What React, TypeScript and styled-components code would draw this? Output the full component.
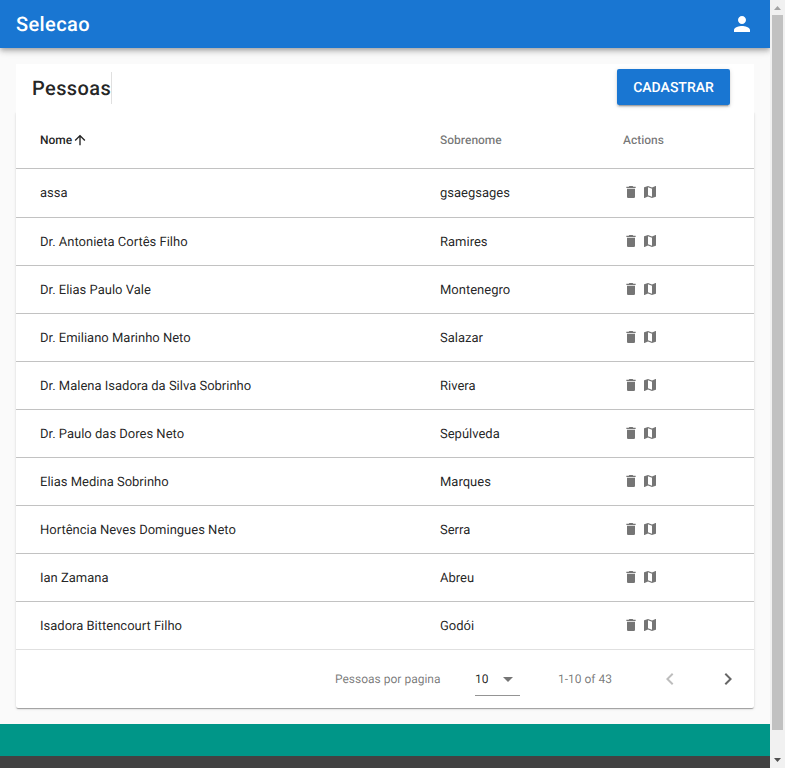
import React from "react";
import styled, { createGlobalStyle } from "styled-components";

const GlobalStyle = createGlobalStyle`
  * { box-sizing: border-box; }
  html, body { margin: 0; padding: 0; overflow: hidden; }
  body { font-family: Roboto, "Liberation Sans", sans-serif; color: rgba(0, 0, 0, 0.87); background: #fafafa; text-rendering: geometricPrecision; }
`;

const Window = styled.div`
  display: grid;
  grid-template-columns: 770px 15px;
  height: 768px;
  overflow: hidden;
`;

const Page = styled.div`
  display: flex;
  flex-direction: column;
  min-width: 0;
  overflow: hidden;
  background: #fafafa;
`;

const Toolbar = styled.header`
  flex: none;
  display: flex;
  align-items: center;
  justify-content: space-between;
  height: 48px;
  padding: 0 16px;
  color: #fff;
  background: #1976d2;
  box-shadow: 0 2px 4px -1px rgba(0, 0, 0, 0.2), 0 4px 5px rgba(0, 0, 0, 0.14), 0 1px 10px rgba(0, 0, 0, 0.12);
`;

const Title = styled.h1`
  margin: 0;
  font-size: 20px;
  font-weight: 500;
  line-height: 24px;
  letter-spacing: 0.4px;
  white-space: nowrap;
`;

const Content = styled.main`
  flex: none;
  height: 676px;
  padding: 16px 16px 0;
`;

const Heading = styled.div`
  display: flex;
  align-items: center;
  height: 48px;
  padding: 0 24px 0 16px;
  background: #fff;
`;

const Divider = styled.span`
  width: 1px;
  height: 32px;
  margin-right: auto;
  background: rgba(0, 0, 0, 0.12);
`;

const PrimaryButton = styled.button`
  width: 113px;
  height: 36px;
  margin-top: -2px;
  padding: 2px 0 0;
  border: 0;
  border-radius: 2px;
  color: #fff;
  background: #1976d2;
  font: 500 14px Roboto, sans-serif;
  text-rendering: inherit;
  box-shadow: 0 3px 1px -2px rgba(0, 0, 0, 0.2), 0 2px 2px rgba(0, 0, 0, 0.14), 0 1px 5px rgba(0, 0, 0, 0.12);
`;

const Card = styled.section`
  background: #fff;
  border-radius: 0 0 2px 2px;
  box-shadow: 0 2px 1px -1px rgba(0, 0, 0, 0.2), 0 1px 1px rgba(0, 0, 0, 0.14), 0 1px 3px rgba(0, 0, 0, 0.12);
  clip-path: inset(0 -4px -6px -4px);
`;

const Row = styled.div<{ $first?: boolean }>`
  display: grid;
  grid-template-columns: 400px 183px 1fr;
  align-items: center;
  height: 48px;
  padding-left: 24px;
  padding-bottom: ${(p) => (p.$first ? "1px" : "0")};
  border-top: ${(p) => (p.$first ? "0" : "1px solid #c2c2c2")};
  font-size: 13px;
`;

const HeaderRow = styled(Row)`
  height: 57px;
  border-top: 0;
  border-bottom: 1px solid #c2c2c2;
  font-size: 12px;
  font-weight: 500;
`;

const HeadCell = styled.span<{ $active?: boolean }>`
  display: flex;
  align-items: center;
  color: ${(p) => (p.$active ? "rgba(0,0,0,0.87)" : "rgba(0,0,0,0.54)")};
`;

const Cell = styled.span`
  padding-top: 2px;
`;

const Actions = styled.span`
  display: flex;
  gap: 3px;
  padding-bottom: 2px;
  color: #757575;
`;

const Glyph = styled.svg`
  display: block;
  flex: none;
  fill: currentColor;
`;

const Footer = styled.footer`
  display: flex;
  align-items: center;
  height: 59px;
  padding-left: 319px;
  border-top: 1px solid #e0e0e0;
  color: rgba(0, 0, 0, 0.54);
  font-size: 12px;
`;

const PerPage = styled.span`
  flex: none;
  width: 140px;
`;

const Select = styled.div`
  flex: none;
  display: flex;
  align-items: center;
  justify-content: space-between;
  width: 45px;
  height: 33px;
  margin-right: 38px;
  border-bottom: 1px solid #949494;
`;

const SelectValue = styled.span`
  color: rgba(0, 0, 0, 0.87);
`;

const Range = styled.span`
  flex: none;
  width: 100px;
`;

const PageButton = styled.span<{ $disabled?: boolean }>`
  flex: none;
  width: ${(p) => (p.$disabled ? "58px" : "24px")};
  color: ${(p) => (p.$disabled ? "rgba(0,0,0,0.26)" : "rgba(0,0,0,0.6)")};
`;

const TealBar = styled.div`
  flex: none;
  height: 32px;
  background: #009688;
`;

const DarkBar = styled.div`
  flex: 1;
  background: #424242;
`;

const Scrollbar = styled.div`
  display: flex;
  flex-direction: column;
  align-items: center;
  background: #f1f1f1;
`;

const Thumb = styled.div`
  width: 11px;
  height: 715px;
  background: #c1c1c1;
`;

const ScrollArrow = styled.div<{ $down?: boolean }>`
  display: flex;
  justify-content: center;
  width: 15px;
  height: ${(p) => (p.$down ? "38px" : "15px")};
  padding-top: ${(p) => (p.$down ? "28px" : "6px")};
  color: ${(p) => (p.$down ? "#505050" : "#a3a3a3")};
`;

const paths = {
  person: "M12 12c2.21 0 4-1.79 4-4s-1.79-4-4-4-4 1.79-4 4 1.79 4 4 4zm0 2c-2.67 0-8 1.34-8 4v2h16v-2c0-2.66-5.33-4-8-4z",
  arrowUp: "M4 12l1.41 1.41L11 7.83V20h2V7.83l5.58 5.59L20 12l-8-8-8 8z",
  trash: "M6 19c0 1.1.9 2 2 2h8c1.1 0 2-.9 2-2V7H6v12zM19 4h-3.5l-1-1h-5l-1 1H5v2h14V4z",
  map: "M20.5 3l-.16.03L15 5.1 9 3 3.36 4.9c-.21.07-.36.25-.36.48V20.5c0 .28.22.5.5.5l.16-.03L9 18.9l6 2.1 5.64-1.9c.21-.07.36-.25.36-.48V3.5c0-.28-.22-.5-.5-.5zM15 19l-6-2.11V5l6 2.11V19z",
  left: "M15.41 7.41L14 6l-6 6 6 6 1.41-1.41L10.83 12z",
  right: "M10 6L8.59 7.41 13.17 12l-4.58 4.59L10 18l6-6z",
  dropdown: "M7 10l5 5 5-5z",
};

const Icon = ({ name, size }: { name: keyof typeof paths; size: number }) => (
  <Glyph width={size} height={size} viewBox="0 0 24 24" aria-hidden="true">
    <path d={paths[name]} />
  </Glyph>
);

const people = [
  ["assa", "gsaegsages"],
  ["Dr. Antonieta Cortês Filho", "Ramires"],
  ["Dr. Elias Paulo Vale", "Montenegro"],
  ["Dr. Emiliano Marinho Neto", "Salazar"],
  ["Dr. Malena Isadora da Silva Sobrinho", "Rivera"],
  ["Dr. Paulo das Dores Neto", "Sepúlveda"],
  ["Elias Medina Sobrinho", "Marques"],
  ["Hortência Neves Domingues Neto", "Serra"],
  ["Ian Zamana", "Abreu"],
  ["Isadora Bittencourt Filho", "Godói"],
];

export default function App() {
  return (
    <Window>
      <GlobalStyle />
      <Page>
        <Toolbar>
          <Title>Selecao</Title>
          <Icon name="person" size={24} />
        </Toolbar>
        <Content>
          <Heading>
            <Title as="h2">Pessoas</Title>
            <Divider />
            <PrimaryButton>CADASTRAR</PrimaryButton>
          </Heading>
          <Card>
            <HeaderRow>
              <HeadCell $active>
                Nome
                <Icon name="arrowUp" size={16} />
              </HeadCell>
              <HeadCell>Sobrenome</HeadCell>
              <HeadCell>Actions</HeadCell>
            </HeaderRow>
            {people.map(([name, surname], i) => (
              <Row key={name} $first={i === 0}>
                <Cell>{name}</Cell>
                <Cell>{surname}</Cell>
                <Actions>
                  <Icon name="trash" size={16} />
                  <Icon name="map" size={16} />
                </Actions>
              </Row>
            ))}
            <Footer>
              <PerPage>Pessoas por pagina</PerPage>
              <Select>
                <SelectValue>10</SelectValue>
                <Icon name="dropdown" size={24} />
              </Select>
              <Range>1-10 of 43</Range>
              <PageButton $disabled>
                <Icon name="left" size={24} />
              </PageButton>
              <PageButton>
                <Icon name="right" size={24} />
              </PageButton>
            </Footer>
          </Card>
        </Content>
        <TealBar />
        <DarkBar />
      </Page>
      <Scrollbar>
        <ScrollArrow>
          <Glyph width="7" height="4" viewBox="0 0 7 4"><path d="M0 4L3.5 0 7 4z" /></Glyph>
        </ScrollArrow>
        <Thumb />
        <ScrollArrow $down>
          <Glyph width="7" height="4" viewBox="0 0 7 4"><path d="M0 0L3.5 4 7 0z" /></Glyph>
        </ScrollArrow>
      </Scrollbar>
    </Window>
  );
}
